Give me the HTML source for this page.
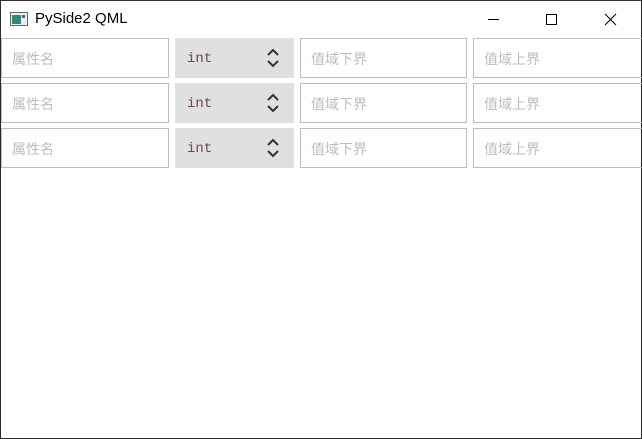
<!DOCTYPE html><html><head><style>
body{margin:0;width:642px;height:439px;overflow:hidden;background:#fff;font-family:"Liberation Sans","Noto Sans CJK SC",sans-serif;}
.win{position:absolute;left:0;top:0;width:640px;height:437px;border:1px solid #2b2b2b;border-top-color:#333;}
.title{position:absolute;left:35px;top:10px;font-size:15px;color:#000;}
.f{position:absolute;height:38px;border:1px solid #bdbdbd;box-sizing:content-box;font-size:14px;color:#bdbdbd;line-height:40px;padding-left:10px;}
.c{position:absolute;height:40px;background:#e0e0e0;font-family:"Liberation Mono",monospace;font-size:14px;color:#6a4a4a;line-height:42px;padding-left:12px;box-sizing:border-box;width:119px;}
.c svg{position:absolute;right:14px;top:10px;}
</style></head><body><div class="win"></div>
<svg style="position:absolute;left:10px;top:12px" width="18" height="14"><rect x="0.5" y="0.5" width="17" height="13" fill="#eee" stroke="#666"/><rect x="2" y="3" width="9" height="9" fill="#2f8a7a"/><rect x="12" y="3" width="3" height="3" fill="#3a6ab0"/></svg>
<div class="title">PySide2 QML</div>
<svg style="position:absolute;left:480px;top:10px" width="150" height="20" stroke="#000" stroke-width="1" fill="none"><line x1="8" y1="9.5" x2="19" y2="9.5"/><rect x="66.5" y="4.5" width="10" height="10"/><path d="M125 4L136 15M136 4L125 15"/></svg>
<div id="rows"></div>
<script>
var h='';[38,83,128].forEach(function(y){
h+='<div class="f" style="left:1px;top:'+y+'px;width:156px">属性名</div>';
h+='<div class="c" style="left:175px;top:'+y+'px">int<svg width="14" height="20" fill="none" stroke="#333" stroke-width="2"><path d="M2 7L7 2L12 7M2 13L7 18L12 13"/></svg></div>';
h+='<div class="f" style="left:300px;top:'+y+'px;width:155px">值域下界</div>';
h+='<div class="f" style="left:473px;top:'+y+'px;width:160px">值域上界</div>';});
document.getElementById('rows').innerHTML=h;
</script></body></html>
